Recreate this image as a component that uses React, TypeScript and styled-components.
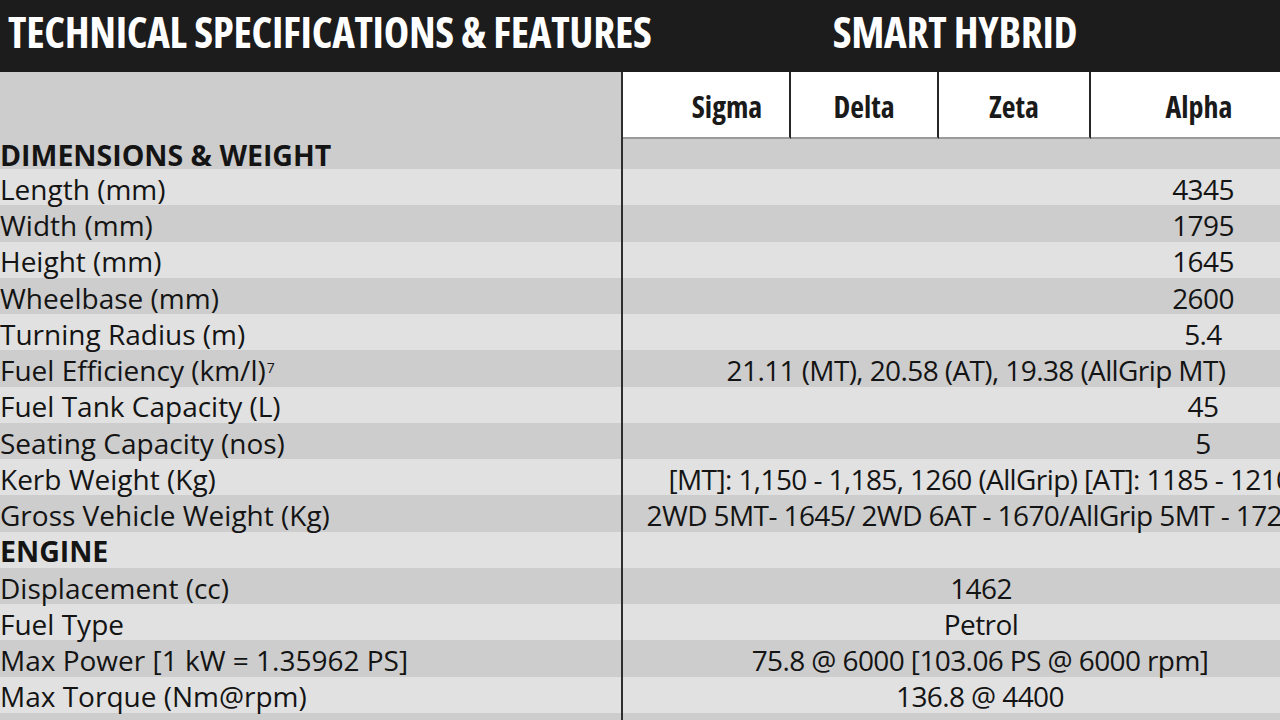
import React from "react";
import styled, { createGlobalStyle } from "styled-components";

const GlobalStyle = createGlobalStyle`
  html, body {
    margin: 0;
    padding: 0;
    background: #e0e0e0;
    overflow: hidden;
  }
`;

type SpecRow =
  | { kind: "section"; label: string; height?: number }
  | { kind: "spec"; label: string; value: string; center: number; sup?: string };

const LINE_X = 623;

const rows: SpecRow[] = [
  { kind: "section", label: "DIMENSIONS & WEIGHT", height: 30 },
  { kind: "spec", label: "Length (mm)", value: "4345", center: 1203 },
  { kind: "spec", label: "Width (mm)", value: "1795", center: 1203 },
  { kind: "spec", label: "Height (mm)", value: "1645", center: 1203 },
  { kind: "spec", label: "Wheelbase (mm)", value: "2600", center: 1203 },
  { kind: "spec", label: "Turning Radius (m)", value: "5.4", center: 1203 },
  {
    kind: "spec",
    label: "Fuel Efficiency (km/l)",
    sup: "7",
    value: "21.11 (MT), 20.58 (AT), 19.38 (AllGrip MT)",
    center: 976,
  },
  { kind: "spec", label: "Fuel Tank Capacity (L)", value: "45", center: 1203 },
  { kind: "spec", label: "Seating Capacity (nos)", value: "5", center: 1203 },
  {
    kind: "spec",
    label: "Kerb Weight (Kg)",
    value: "[MT]: 1,150 - 1,185, 1260 (AllGrip) [AT]: 1185 - 1210",
    center: 980,
  },
  {
    kind: "spec",
    label: "Gross Vehicle Weight (Kg)",
    value: "2WD 5MT- 1645/ 2WD 6AT - 1670/AllGrip 5MT - 1720",
    center: 972,
  },
  { kind: "section", label: "ENGINE" },
  { kind: "spec", label: "Displacement (cc)", value: "1462", center: 981 },
  { kind: "spec", label: "Fuel Type", value: "Petrol", center: 981 },
  {
    kind: "spec",
    label: "Max Power [1 kW = 1.35962 PS]",
    value: "75.8 @ 6000 [103.06 PS @ 6000 rpm]",
    center: 980,
  },
  { kind: "spec", label: "Max Torque (Nm@rpm)", value: "136.8 @ 4400", center: 980 },
  { kind: "section", label: "HYBRID" },
];

const variants = [
  { name: "Sigma", width: 168, pad: 42 },
  { name: "Delta", width: 148, pad: 0 },
  { name: "Zeta", width: 152, pad: 0 },
  { name: "Alpha", width: 218, pad: 0 },
  { name: "", width: 200, pad: 0 },
];

const Page = styled.div`
  width: 1280px;
  height: 720px;
  overflow: hidden;
  font-family: "Open Sans", "Noto Sans", sans-serif;
  color: #141414;
`;

const TopBar = styled.header`
  display: flex;
  align-items: center;
  height: 72px;
  background: #1c1c1c;
  color: #ffffff;
`;

const BarTitle = styled.h1<{ $width: number; $align: "left" | "center"; $pad: number }>`
  flex: none;
  width: ${(p) => p.$width}px;
  margin: 0;
  padding-left: ${(p) => p.$pad}px;
  padding-bottom: 10px;
  box-sizing: border-box;
  text-align: ${(p) => p.$align};
  font-size: 43px;
  font-weight: 700;
  font-stretch: 75%;
  letter-spacing: -0.3px;
  white-space: nowrap;
`;

const Row = styled.div<{ $dark: boolean; $height: number }>`
  display: flex;
  height: ${(p) => p.$height}px;
  background: ${(p) => (p.$dark ? "#cdcdcd" : "#e1e1e1")};
`;

const LabelCell = styled.div<{ $bold?: boolean }>`
  flex: none;
  width: ${LINE_X}px;
  box-sizing: border-box;
  border-right: 2px solid #2e2e2e;
  display: flex;
  align-items: center;
  padding-top: 4px;
  font-size: ${(p) => (p.$bold ? 28.5 : 28)}px;
  font-weight: ${(p) => (p.$bold ? 700 : 400)};
  line-height: 1.1;
  white-space: nowrap;
  overflow: visible;
`;

const Sup = styled.sup`
  font-size: 14px;
  vertical-align: top;
  line-height: 1;
  margin-top: -4px;
  margin-left: 1px;
`;

const ValueCell = styled.div<{ $span: number }>`
  flex: none;
  width: ${(p) => p.$span}px;
  display: flex;
  align-items: center;
  justify-content: center;
  padding-top: 4px;
  font-size: 28px;
  line-height: 1.1;
  letter-spacing: -0.6px;
  white-space: nowrap;
`;

const HeaderRow = styled.div`
  display: flex;
  height: 67px;
  background: #cdcdcd;
`;

const VariantCell = styled.div<{ $width: number; $pad: number }>`
  flex: none;
  width: ${(p) => p.$width}px;
  box-sizing: border-box;
  padding-left: ${(p) => p.$pad}px;
  padding-top: 3px;
  background: #ffffff;
  border-right: 2px solid #262626;
  border-bottom: 2px solid #9a9a9a;
  display: flex;
  align-items: center;
  justify-content: center;
  font-size: 30px;
  font-weight: 700;
  font-stretch: 75%;
  color: #1a1a1a;
`;

const App: React.FC = () => {
  return (
    <Page>
      <GlobalStyle />
      <TopBar>
        <BarTitle $width={LINE_X} $align="left" $pad={8}>
          TECHNICAL SPECIFICATIONS &amp; FEATURES
        </BarTitle>
        <BarTitle $width={664} $align="center" $pad={0}>
          SMART HYBRID
        </BarTitle>
      </TopBar>
      <HeaderRow>
        <LabelCell />
        {variants.map((v, i) => (
          <VariantCell key={i} $width={v.width} $pad={v.pad}>
            {v.name}
          </VariantCell>
        ))}
      </HeaderRow>
      {rows.map((row, i) => {
        const dark = i % 2 === 0;
        if (row.kind === "section") {
          return (
            <Row key={i} $dark={dark} $height={row.height ?? 36.27}>
              <LabelCell $bold>{row.label}</LabelCell>
            </Row>
          );
        }
        return (
          <Row key={i} $dark={dark} $height={36.27}>
            <LabelCell>
              {row.label}
              {row.sup && <Sup>{row.sup}</Sup>}
            </LabelCell>
            <ValueCell $span={2 * (row.center - LINE_X)}>{row.value}</ValueCell>
          </Row>
        );
      })}
    </Page>
  );
};

export default App;
